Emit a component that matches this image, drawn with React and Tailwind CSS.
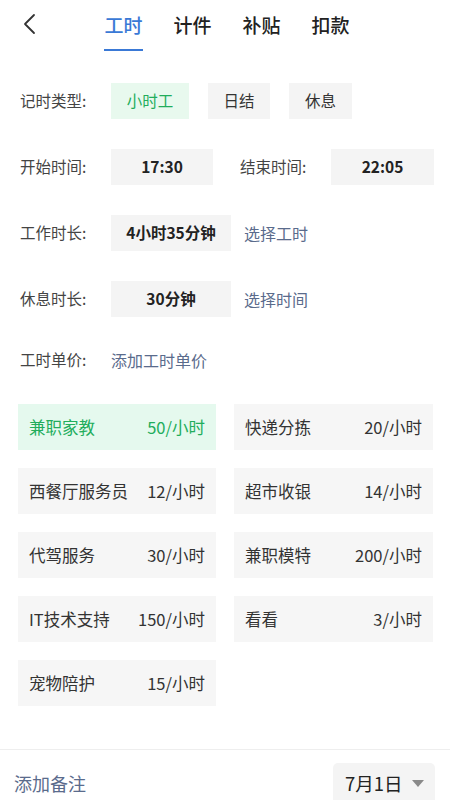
const tabs = ["工时", "计件", "补贴", "扣款"];

const jobs = [
  { name: "兼职家教", price: "50/小时", active: true },
  { name: "快递分拣", price: "20/小时" },
  { name: "西餐厅服务员", price: "12/小时" },
  { name: "超市收银", price: "14/小时" },
  { name: "代驾服务", price: "30/小时" },
  { name: "兼职模特", price: "200/小时" },
  { name: "IT技术支持", price: "150/小时" },
  { name: "看看", price: "3/小时" },
  { name: "宠物陪护", price: "15/小时" },
];

const font = { fontFamily: '"Noto Sans CJK SC", "Noto Sans", sans-serif' };

const Label = ({ children }) => (
  <span className="w-[91px] shrink-0 text-[15.5px] text-[#444]">{children}</span>
);

const Chip = ({ children, className = "" }) => (
  <div
    className={`h-[36px] shrink-0 flex items-center justify-center bg-[#f4f4f4] text-[15.5px] font-bold text-[#222] ${className}`}
  >
    {children}
  </div>
);

const App = () => {
  return (
    <div
      className="w-[450px] h-[800px] overflow-hidden bg-white flex flex-col"
      style={font}
    >
      <div className="h-[83px] shrink-0 flex flex-col">
        <div className="h-[52px] flex">
          <div className="w-[104px] flex items-start pt-[13px] pl-[20px]">
            <svg width="18" height="22" viewBox="0 0 18 22" fill="none">
              <path
                d="M14 2 L5 11 L14 20"
                stroke="#333"
                strokeWidth="1.8"
                strokeLinecap="round"
                strokeLinejoin="round"
              />
            </svg>
          </div>
          <div className="flex gap-[30px]">
            {tabs.map((t, i) => (
              <div key={t} className="flex flex-col items-center w-[39px]">
                <span
                  className={`pt-[10px] h-[49px] text-[19px] leading-[30px] font-medium ${
                    i === 0 ? "text-[#3a79d6]" : "text-[#222]"
                  }`}
                >
                  {t}
                </span>
                {i === 0 && <div className="w-[39px] h-[2px] bg-[#3a79d6]" />}
              </div>
            ))}
          </div>
        </div>
      </div>

      <div className="shrink-0 pl-[20px] flex flex-col gap-[30px]">
        <div className="h-[36px] flex items-center">
          <Label>记时类型:</Label>
          <div className="flex gap-[19px]">
            <div className="w-[78px] h-[36px] flex items-center justify-center bg-[#e8f9ee] text-[15.5px] text-[#22ad5c]">
              小时工
            </div>
            <div className="w-[62px] h-[36px] flex items-center justify-center bg-[#f4f4f4] text-[15.5px] text-[#333]">
              日结
            </div>
            <div className="w-[63px] h-[36px] flex items-center justify-center bg-[#f4f4f4] text-[15.5px] text-[#333]">
              休息
            </div>
          </div>
        </div>

        <div className="h-[36px] flex items-center">
          <Label>开始时间:</Label>
          <Chip className="w-[102px]">17:30</Chip>
          <span className="ml-[27px] w-[91px] text-[15.5px] text-[#444]">结束时间:</span>
          <Chip className="w-[103px]">22:05</Chip>
        </div>

        <div className="h-[36px] flex items-center">
          <Label>工作时长:</Label>
          <Chip className="w-[120px]">4小时35分钟</Chip>
          <span className="ml-[13px] text-[16px] text-[#5a6b8c]">选择工时</span>
        </div>

        <div className="h-[36px] flex items-center">
          <Label>休息时长:</Label>
          <Chip className="w-[120px]">30分钟</Chip>
          <span className="ml-[13px] text-[16px] text-[#5a6b8c]">选择时间</span>
        </div>

        <div className="h-[26px] flex items-center">
          <Label>工时单价:</Label>
          <span className="text-[16px] text-[#5a6b8c]">添加工时单价</span>
        </div>
      </div>

      <div className="shrink-0 mt-[31px] pl-[18px] grid grid-cols-[198px_199px] gap-x-[18px] gap-y-[18px]">
        {jobs.map((j) => (
          <div
            key={j.name}
            className={`h-[46px] flex items-center justify-between pl-[11px] pr-[11px] text-[16.5px] ${
              j.active ? "bg-[#e5f9ee] text-[#22ad5c]" : "bg-[#f6f6f6] text-[#333]"
            }`}
          >
            <span>{j.name}</span>
            <span>{j.price}</span>
          </div>
        ))}
      </div>

      <div className="shrink-0 mt-[43px] border-t border-[#eeeeee] flex justify-between items-start pl-[14px] pr-[15px] pt-[13px]">
        <span className="mt-[7px] text-[18px] text-[#5a6b8c]">添加备注</span>
        <div className="w-[102px] h-[42px] rounded-t-[5px] bg-[#f4f4f4] flex items-center pl-[12px] gap-[8px]">
          <span className="text-[18.5px] text-[#222]">7月1日</span>
          <svg width="14" height="10" viewBox="0 0 14 10">
            <path d="M1 1 L13 1 L7 8 Z" fill="#8a8a8a" />
          </svg>
        </div>
      </div>
    </div>
  );
};

export default App;
